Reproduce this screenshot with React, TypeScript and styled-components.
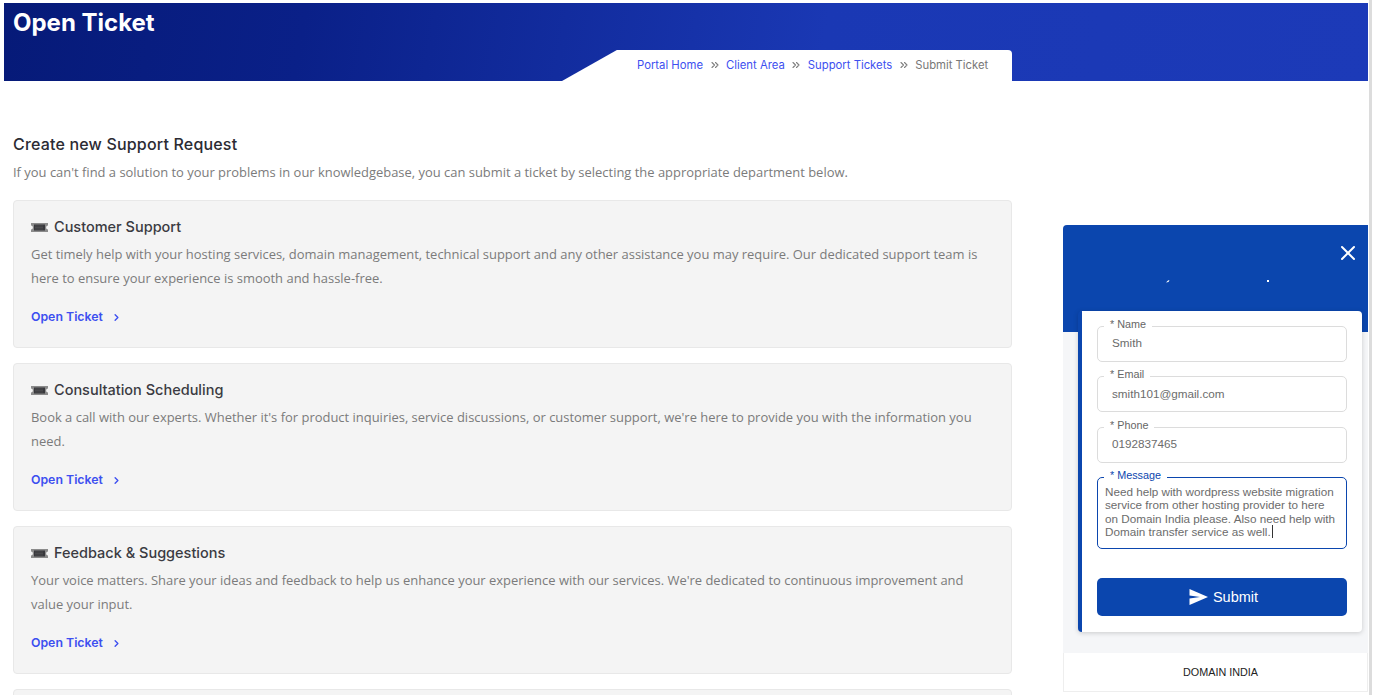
import { createGlobalStyle } from "styled-components"
import styled from "styled-components"
import { X, ChevronRight, ChevronsRight } from "lucide-react"

const BLUE = "#0b46ae"
const LINK = "#3d4ff0"
const HEADING_FONT = "Inter, Roboto, 'Liberation Sans', sans-serif"
const BODY_FONT = "'Open Sans', 'Noto Sans', sans-serif"
const FORM_FONT = "'Liberation Sans', Arial, sans-serif"

const GlobalStyle = createGlobalStyle`
  html, body {
    margin: 0;
    padding: 0;
    height: 695px;
    overflow: hidden;
    background: #fff;
  }
  * { box-sizing: border-box; }
`

const Page = styled.div`
  position: relative;
  width: 1374px;
  height: 695px;
  padding: 3px 6px 0 4px;
  overflow: hidden;
`

const Hero = styled.header`
  position: relative;
  height: 78px;
  padding: 6px 0 0 9px;
  background: linear-gradient(100deg, #061a78 0%, #0a2088 22%, #1a38b4 60%, #1c3ab8 100%);
`

const HeroTitle = styled.h1`
  margin: 0;
  font: 700 24px/28px ${HEADING_FONT};
  color: #fff;
`

const Crumbs = styled.nav`
  position: absolute;
  left: 558px;
  bottom: 0;
  width: 450px;
  height: 31px;
  padding: 0 0 2px 75px;
  display: flex;
  align-items: center;
  gap: 5.5px;
  background: #fff;
  border-top-right-radius: 4px;
  clip-path: polygon(12.2% 0, 100% 0, 100% 100%, 0 100%);
  font: 400 11.3px/16px ${HEADING_FONT};
`

const Crumb = styled.a<{ $current?: boolean }>`
  color: ${props => (props.$current ? "#777" : LINK)};
  white-space: nowrap;
`

const Separator = styled(ChevronsRight)`
  width: 12px;
  height: 12px;
  color: #808080;
  stroke-width: 2.2;
`

const Main = styled.main`
  width: 999px;
  margin-left: 9px;
  padding-top: 53px;
`

const Heading = styled.h2`
  margin: 0;
  font: 500 16px/20px ${HEADING_FONT};
  letter-spacing: 0.18px;
  color: #2b2b33;
`

const Lead = styled.p`
  margin: 8px 0 18px;
  font: 400 12.94px/20px ${BODY_FONT};
  color: #7b7b7b;
`

const CardList = styled.div`
  display: flex;
  flex-direction: column;
  gap: 15px;
`

const Card = styled.article`
  min-height: 148px;
  padding: 17px 17px 0;
  background: #f4f4f4;
  border: 1px solid #e8e8e8;
  border-radius: 4px;
`

const CardTitle = styled.h3`
  margin: 0;
  display: flex;
  align-items: center;
  gap: 6px;
  font: 500 14.5px/18px ${HEADING_FONT};
  color: #3b3b42;
`

const CardText = styled.p`
  margin: 6px 0 0;
  font: 400 12.96px/24px ${BODY_FONT};
  color: #7b7b7b;
`

const CardLink = styled.a`
  margin-top: 19px;
  display: flex;
  align-items: center;
  gap: 8px;
  font: 600 12.3px/16px ${HEADING_FONT};
  color: ${LINK};
`

const LinkArrow = styled(ChevronRight)`
  width: 11px;
  height: 11px;
  stroke-width: 3;
`

const Widget = styled.aside`
  position: absolute;
  left: 1063px;
  top: 225px;
  width: 305px;
  height: 467px;
  display: flex;
  flex-direction: column;
  background: #f5f6f8;
  border-radius: 4px 0 0 0;
`

const WidgetHeader = styled.div`
  position: relative;
  height: 107px;
  flex: none;
  background: ${BLUE};
  border-top-left-radius: 4px;
`

const CloseIcon = styled(X)`
  position: absolute;
  right: 8px;
  top: 16px;
  width: 24px;
  height: 24px;
  color: #fff;
  stroke-width: 2;
`

// the widget title is cut off in the capture, only two specks of it show
const TitleSpecks = styled.svg`
  position: absolute;
  left: 103px;
  top: 54px;
`

const FormCard = styled.form`
  position: absolute;
  left: 15px;
  top: 86px;
  width: 284px;
  height: 321px;
  padding: 15px 15px 0;
  background: #fff;
  border-left: 4px solid ${BLUE};
  border-radius: 4px;
  box-shadow: 0 1px 5px rgba(0, 0, 0, 0.18);
`

const Field = styled.div<{ $active?: boolean }>`
  position: relative;
  height: ${props => (props.$active ? "72px" : "36px")};
  margin-bottom: 14.4px;
  padding: ${props => (props.$active ? "6.6px 7px 0" : "0 14px 2px")};
  display: ${props => (props.$active ? "block" : "flex")};
  align-items: center;
  background: #fff;
  border: 1px solid ${props => (props.$active ? BLUE : "#dcdcdc")};
  border-radius: 5px;
  font: 400 11.7px/13.5px ${FORM_FONT};
  color: #6c6c6c;
`

const FieldLabel = styled.label<{ $active?: boolean }>`
  position: absolute;
  left: 6px;
  top: -9px;
  padding: 0 6px;
  background: #fff;
  font: 400 10.8px/13px ${FORM_FONT};
  color: ${props => (props.$active ? BLUE : "#666")};
`

const Caret = styled.span`
  display: inline-block;
  width: 1px;
  height: 13px;
  margin-left: 1px;
  vertical-align: -2px;
  background: #333;
`

const SubmitButton = styled.button`
  width: 250px;
  height: 38px;
  margin-top: 29px;
  padding: 0 0 0 3px;
  display: flex;
  align-items: center;
  justify-content: center;
  gap: 5px;
  border: 0;
  border-radius: 5px;
  background: ${BLUE};
  color: #fff;
  font: 400 14.5px/18px ${FORM_FONT};
`

const WidgetFooter = styled.div`
  margin-top: auto;
  height: 39px;
  padding-left: 10px;
  display: flex;
  align-items: center;
  justify-content: center;
  background: #fff;
  border: 1px solid #eeeeee;
  border-top: 0;
  font: 400 10.8px/14px ${FORM_FONT};
  color: #222;
`

const ScrollTrack = styled.div`
  position: absolute;
  right: 2px;
  top: 0;
  width: 3px;
  height: 695px;
  background: #dcdcdc;
`

const TicketIcon = () => (
  <svg width="17" height="11" viewBox="0 0 17 11" aria-hidden="true">
    <path d="M0 1h17v2.6a1.9 1.9 0 0 0 0 3.8V10H0V7.4a1.9 1.9 0 0 0 0-3.8z" fill="#8b8b8b" />
    <rect x="3" y="2.5" width="11" height="6" fill="#38383c" />
    <path d="M4.5 4h8M4.5 5.5h8M4.5 7h8" stroke="#6e6e6e" strokeWidth=".7" strokeDasharray="1 1" />
  </svg>
)

const SendIcon = () => (
  <svg width="19" height="16" viewBox="0 0 19 16" aria-hidden="true">
    <path d="M0.5 0 L19 8 L0.5 16 L0.5 9.6 L11 8 L0.5 6.4 Z" fill="#fff" />
  </svg>
)

const departments = [
  {
    title: "Customer Support",
    text: "Get timely help with your hosting services, domain management, technical support and any other assistance you may require. Our dedicated support team is here to ensure your experience is smooth and hassle-free.",
  },
  {
    title: "Consultation Scheduling",
    text: "Book a call with our experts. Whether it's for product inquiries, service discussions, or customer support, we're here to provide you with the information you need.",
  },
  {
    title: "Feedback & Suggestions",
    text: "Your voice matters. Share your ideas and feedback to help us enhance your experience with our services. We're dedicated to continuous improvement and value your input.",
  },
]

const fields = [
  { label: "Name", value: "Smith" },
  { label: "Email", value: "smith101@gmail.com" },
  { label: "Phone", value: "0192837465" },
]

export default function App() {
  return (
    <Page>
      <GlobalStyle />
      <Hero>
        <HeroTitle>Open Ticket</HeroTitle>
        <Crumbs>
          <Crumb>Portal Home</Crumb>
          <Separator />
          <Crumb>Client Area</Crumb>
          <Separator />
          <Crumb>Support Tickets</Crumb>
          <Separator />
          <Crumb $current>Submit Ticket</Crumb>
        </Crumbs>
      </Hero>
      <Main>
        <Heading>Create new Support Request</Heading>
        <Lead>
          If you can't find a solution to your problems in our knowledgebase, you can submit a ticket by selecting the appropriate department below.
        </Lead>
        <CardList>
          {departments.map(item => (
            <Card key={item.title}>
              <CardTitle>
                <TicketIcon />
                {item.title}
              </CardTitle>
              <CardText>{item.text}</CardText>
              <CardLink>
                Open Ticket
                <LinkArrow />
              </CardLink>
            </Card>
          ))}
          <Card />
        </CardList>
      </Main>
      <Widget>
        <WidgetHeader>
          <CloseIcon />
          <TitleSpecks width="105" height="4" viewBox="0 0 105 4" aria-hidden="true">
            <path d="M0 3.5 L2.5 3 L3.5 1 L2 1.5 Z" fill="#fff" />
            <rect x="101" y="1" width="2" height="2" fill="#fff" />
          </TitleSpecks>
        </WidgetHeader>
        <FormCard>
          {fields.map(field => (
            <Field key={field.label}>
              <FieldLabel>* {field.label}</FieldLabel>
              {field.value}
            </Field>
          ))}
          <Field $active>
            <FieldLabel $active>* Message</FieldLabel>
            Need help with wordpress website migration service from other hosting provider to here on Domain India please. Also need help with Domain transfer service as well.
            <Caret />
          </Field>
          <SubmitButton type="button">
            <SendIcon />
            Submit
          </SubmitButton>
        </FormCard>
        <WidgetFooter>DOMAIN INDIA</WidgetFooter>
      </Widget>
      <ScrollTrack />
    </Page>
  )
}
